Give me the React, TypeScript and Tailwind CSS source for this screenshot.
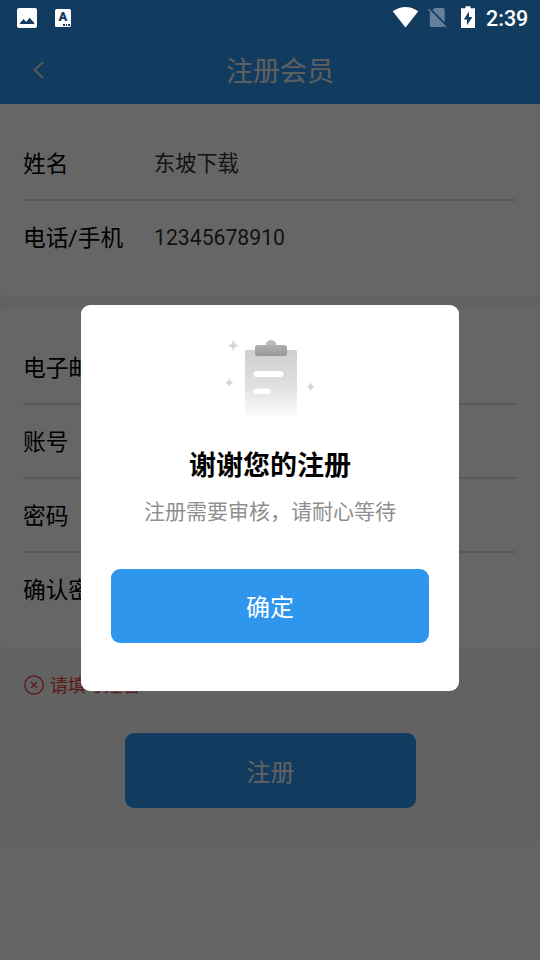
import type { ReactNode } from "react";

function StatusBar() {
  return (
    <div className="absolute inset-x-0 top-0 z-20 h-9">
      <svg className="h-9 w-full" viewBox="0 0 540 36" fill="#fff">
        <path fillRule="evenodd" d="M19 8h16a2 2 0 0 1 2 2v16a2 2 0 0 1-2 2H19a2 2 0 0 1-2-2V10a2 2 0 0 1 2-2Zm1 16h14.200v-1.300l-4.700-5-3.300 4.200-2.600-2.800L20 23Z" />
        <rect x="55" y="9" width="16" height="18" rx="1.500" />
        <path d="M392.700 11.300Q405.500 2.500 418.300 11.300L405.500 27.500Z" />
        <path d="M434.500 8H443a1.700 1.700 0 0 1 1.700 1.700V25.200a1.700 1.700 0 0 1-1.700 1.700H431.500a1.700 1.700 0 0 1-1.700-1.700V12.700Z" fill="#64809a" />
        <path d="M428.500 7.500L448 27" stroke="#133c5f" strokeWidth="2" />
        <path d="M428.300 9.200L446.500 27.400" stroke="#64809a" strokeWidth="1.300" />
        <path fillRule="evenodd" d="M465.500 6.200h5v2h4.500V28h-14V8.200h4.500ZM469 11.500l-5.200 8h3.200V25.200l5.400-8.200h-3.400Z" />
      </svg>
      <span className="absolute left-[58px] top-[8px] w-[10px] text-center font-['Roboto',sans-serif] text-[13px] font-black leading-[18px] text-[#133c5f]">A</span>
      <span className="absolute left-[63px] top-[24px] flex gap-px">
        <i className="size-[1.5px] bg-[#133c5f]" />
        <i className="size-[1.5px] bg-[#133c5f]" />
        <i className="size-[1.5px] bg-[#133c5f]" />
      </span>
      <span className="absolute left-[486px] top-[5px] whitespace-nowrap font-['Roboto',sans-serif] text-[21.500px] font-medium leading-[28px] text-white">2:39</span>
    </div>
  );
}

function Row({ label, value, last }: { label: string; value?: string; last?: boolean }) {
  return (
    <div className={`flex h-[74px] items-center border-b-2 pt-[5px] ${last ? "border-transparent" : "border-[#dedede]"}`}>
      <span className="w-[131px] shrink-0 whitespace-nowrap text-[22.700px] text-black">{label}</span>
      {value && <span className="whitespace-nowrap pb-[3px] text-[21.200px] text-[#303030]">{value}</span>}
    </div>
  );
}

function Card({ children, first }: { children: ReactNode; first?: boolean }) {
  return (
    <section className={`bg-white pb-[21px] pl-[23px] pr-6 pt-[23px] ${first ? "rounded-b-lg" : "rounded-lg"}`}>
      {children}
    </section>
  );
}

function Clipboard() {
  return (
    <svg width="100" height="90" viewBox="220 335 100 90">
      <defs>
        <linearGradient id="paper" x1="0" y1="0" x2="0" y2="1">
          <stop stopColor="#cecece" />
          <stop offset=".55" stopColor="#e1e1e1" />
          <stop offset="1" stopColor="#fff" />
        </linearGradient>
        <linearGradient id="clip" x1="0" y1="0" x2="0" y2="1">
          <stop stopColor="#b0b0b0" />
          <stop offset="1" stopColor="#999" />
        </linearGradient>
      </defs>
      <path d="M247 350h48a2 2 0 0 1 2 2v67h-52v-67a2 2 0 0 1 2-2Z" fill="url(#paper)" />
      <circle cx="271" cy="345.500" r="5.500" fill="#bbb" />
      <rect x="255" y="345" width="32" height="11" rx="2.500" fill="url(#clip)" />
      <rect x="253.500" y="371" width="30" height="6" rx="3" fill="#fff" />
      <rect x="253.500" y="388.500" width="17" height="5.500" rx="2.750" fill="#fff" />
      <g fill="#d5d5d5">
        <path d="M233.300 339.700q.8 5 5.500 5.800-4.700.8-5.500 5.800-.8-5-5.500-5.800 4.700-.8 5.500-5.800Z" />
        <path d="M229.300 378q.7 4 4.600 4.700-3.900.7-4.600 4.700-.7-4-4.600-4.700 3.900-.7 4.600-4.700Z" />
        <path d="M310.700 382q.7 4 4.600 4.700-3.900.7-4.600 4.700-.7-4-4.600-4.700 3.900-.7 4.600-4.700Z" />
      </g>
    </svg>
  );
}

export default function App() {
  return (
    <div className="relative h-[960px] w-[540px] overflow-hidden bg-[#f9f9f9] font-['Roboto','Noto_Sans_CJK_SC',sans-serif]">
      <header className="flex h-[104px] items-end bg-[#2f96ee]">
        <div className="flex h-[68px] w-full items-center">
          <svg className="ml-[30px] h-6 w-4 shrink-0" viewBox="30 58 16 24" fill="none" stroke="#dedede" strokeWidth="2">
            <path d="M43 62l-8.500 8 8.500 8" />
          </svg>
          <h1 className="ml-[180px] whitespace-nowrap pt-[5px] text-[27px] text-[#ededed]">注册会员</h1>
        </div>
      </header>
      <main className="flex h-[739px] flex-col gap-3 bg-[#f5f5f5]">
        <Card first>
          <Row label="姓名" value="东坡下载" />
          <Row label="电话/手机" value="12345678910" last />
        </Card>
        <Card>
          <Row label="电子邮箱" />
          <Row label="账号" />
          <Row label="密码" />
          <Row label="确认密码" last />
        </Card>
        <div className="mt-3 flex h-[26px] items-center gap-[6px] pl-6 text-[18px] text-[#e23d3d]">
          <svg width="20" height="20" viewBox="0 0 20 20" fill="none" stroke="currentColor" strokeWidth="1.300">
            <circle cx="10" cy="10" r="9.200" />
            <path d="M7 7l6 6M13 7l-6 6" />
          </svg>
          <span>请填写姓名</span>
        </div>
        <button className="ml-[125px] mt-[23px] h-[75px] w-[291px] rounded-[9px] bg-[#2f96ee] pt-[5px] text-[24px] text-[#f5f5f5]">注册</button>
      </main>
      <div className="absolute inset-0 z-10 flex items-start justify-center bg-black/60 pt-[305px]">
        <div className="flex h-[386px] w-[378px] flex-col items-center rounded-[9px] bg-white pt-[30px]">
          <Clipboard />
          <h2 className="mt-[21px] text-[27px] font-bold leading-[40px] text-black">谢谢您的注册</h2>
          <p className="mt-[10px] text-[21px] leading-[32px] text-[#8f8f8f]">注册需要审核，请耐心等待</p>
          <button className="mt-[41px] h-[74px] w-[318px] rounded-[9px] bg-[#2f96ee] pt-[3px] text-[24px] text-white">确定</button>
        </div>
      </div>
      <StatusBar />
    </div>
  );
}
